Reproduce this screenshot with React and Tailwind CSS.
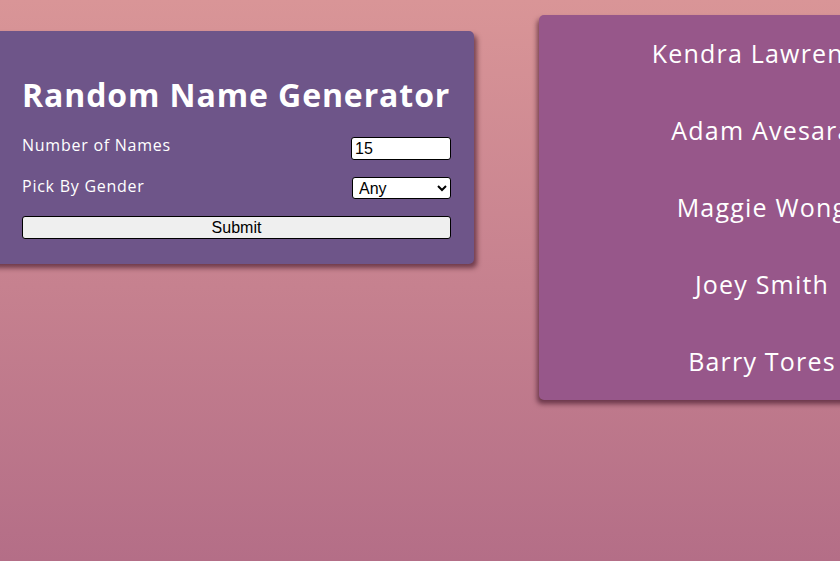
import React from "react";

const names = ["Kendra Lawrence", "Adam Avesara", "Maggie Wong", "Joey Smith", "Barry Tores"];

export default function App() {
  return (
    <div className="h-[561px] w-[840px] overflow-hidden bg-gradient-to-b from-[#d99597] to-[#b46e87] font-['Open_Sans',sans-serif] text-white">
      <div className="flex items-start">
        <div className="ml-[-20px] mt-[31px] w-[494px] shrink-0 rounded-[5px] bg-[#6e5589] pb-[25px] pl-[42px] pr-[23px] pt-[44px] shadow-[3px_4px_5px_rgba(40,0,20,0.55)]">
          <h1 className="text-[32px] font-bold leading-[40px] tracking-[0.9px] whitespace-nowrap">Random Name Generator</h1>
          <div className="mt-[22px] flex items-center justify-between">
            <span className="text-[16px] leading-[20px] tracking-[0.75px] -mt-[8px]">Number of Names</span>
            <input
              defaultValue="15"
              className="h-[23px] w-[100px] rounded-[3px] border border-black bg-white px-[3px] font-['Liberation_Sans',sans-serif] text-[16px] text-black"
            />
          </div>
          <div className="mt-[17px] flex items-center justify-between">
            <span className="text-[16px] leading-[20px] tracking-[0.75px] -mt-[5px]">Pick By Gender</span>
            <select className="h-[22px] w-[99px] appearance-auto rounded-[3px] border border-black bg-white pl-[2px] font-['Liberation_Sans',sans-serif] text-[16px] text-black">
              <option>Any</option>
            </select>
          </div>
          <button className="mt-[17px] block h-[23px] w-full rounded-[3px] border border-black bg-[#efefef] font-['Liberation_Sans',sans-serif] text-[16px] leading-[20px] text-black">
            Submit
          </button>
        </div>
        <div className="ml-[65px] mt-[15px] w-[446px] shrink-0 rounded-[5px] bg-[#97578a] shadow-[-2px_4px_5px_rgba(40,0,20,0.55)]">
          {names.map((n) => (
            <div key={n} className="flex h-[77px] items-center justify-center text-[25px] tracking-[1.2px] whitespace-nowrap">
              {n}
            </div>
          ))}
        </div>
      </div>
    </div>
  );
}
